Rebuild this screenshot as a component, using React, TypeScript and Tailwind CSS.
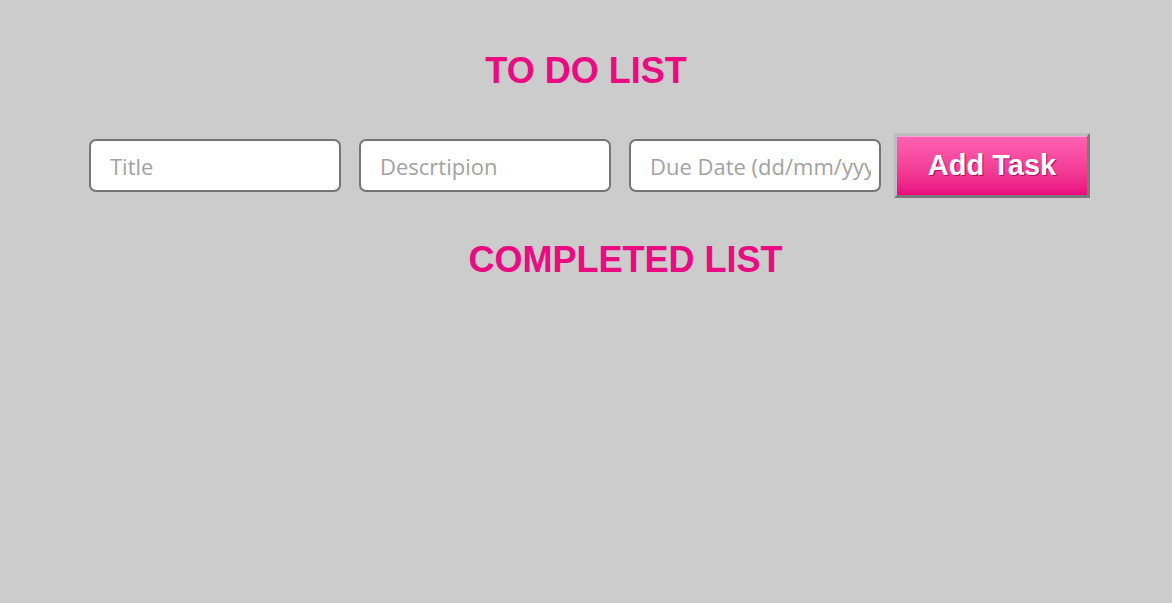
import React from "react";

export default function App() {
  const inputCls =
    "w-[252px] h-[53px] box-border border-2 border-[#757575] rounded-[7px] bg-white pl-[19px] pr-2 text-[22px] text-[#333] placeholder:text-[#a2a2a2] outline-none [font-family:'Open_Sans',sans-serif]";
  return (
    <div className="min-h-[603px] w-full bg-[#cccccc] [font-family:'Liberation_Sans',Arial,sans-serif]">
      <h1 className="pt-[50px] text-center text-[36px] leading-[41px] font-bold text-[#ea0a82]">
        TO DO LIST
      </h1>
      <div className="mt-[42px] flex items-center justify-center gap-[18px] pl-[7px]">
        <input className={inputCls} placeholder="Title" />
        <input className={inputCls} placeholder="Descrtipion" />
        <input className={inputCls} placeholder="Due Date (dd/mm/yyyy)" />
        <button className="-ml-[5px] w-[196px] h-[65px] box-border border-[3px] border-t-[#bdbdbd] border-l-[#bdbdbd] border-r-[#7a7a7a] border-b-[#7a7a7a] bg-gradient-to-b from-[#ff62b4] to-[#e9067f] shadow-[inset_0_1px_0_#f9a6d4] text-white text-[29px] font-bold [text-shadow:1px_1px_0_#b0105f]">
          Add Task
        </button>
      </div>
      <h2 className="mt-[41px] pl-[79px] text-center text-[36px] leading-[41px] font-bold text-[#ea0a82]">
        COMPLETED LIST
      </h2>
    </div>
  );
}
